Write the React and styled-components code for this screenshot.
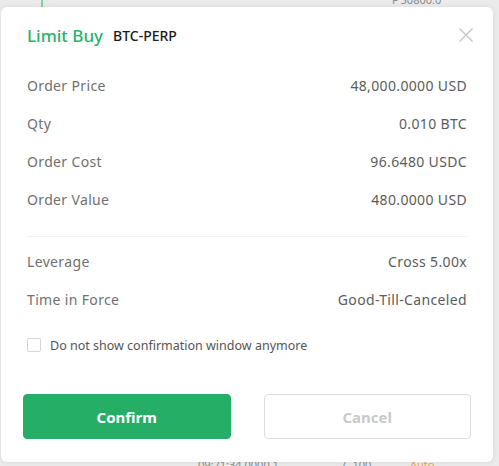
import React from "react";
import styled, { createGlobalStyle } from "styled-components";

const Global = createGlobalStyle`
  html, body { margin: 0; padding: 0; }
  body {
    background: #ebebeb;
    font-family: "Noto Sans", "Open Sans", "Liberation Sans", sans-serif;
    width: 499px;
    height: 466px;
    overflow: hidden;
  }
`;

const Stage = styled.div`
  position: relative;
  width: 499px;
  height: 466px;
  box-sizing: border-box;
  padding: 7px 6px 4px 1px;
`;

const BgLine = styled.div`
  position: absolute;
  left: 41px;
  top: 0;
  width: 2px;
  height: 7px;
  background: #7fd3a6;
`;

const BgText = styled.span`
  position: absolute;
  left: ${(p) => p.$x}px;
  top: ${(p) => p.$y}px;
  font-size: 11px;
  line-height: 12px;
  color: ${(p) => p.$c || "#8a8a8a"};
  white-space: nowrap;
`;

const Modal = styled.div`
  position: relative;
  z-index: 1;
  height: 100%;
  background: #fff;
  border-radius: 6px;
  box-shadow: 0 0 6px rgba(0, 0, 0, 0.08);
  padding: 17px 26px 0 26px;
  box-sizing: border-box;
  display: flex;
  flex-direction: column;
`;

const Header = styled.div`
  display: flex;
  align-items: center;
  height: 22px;
  gap: 10px;
`;

const Title = styled.span`
  color: #28b26a;
  font-size: 17px;
  font-weight: 500;
`;

const Symbol = styled.span`
  color: #1a1a1a;
  font-size: 14px;
  font-weight: 500;
`;

const Close = styled.button`
  margin-left: auto;
  margin-right: -7px;
  background: none;
  border: 0;
  padding: 0;
  width: 16px;
  height: 16px;
  display: flex;
  cursor: pointer;
`;

const Section = styled.div`
  display: flex;
  flex-direction: column;
  margin-top: ${(p) => p.$mt}px;
`;

const Row = styled.div`
  display: flex;
  justify-content: space-between;
  align-items: center;
  height: ${(p) => p.$h || 38}px;
  font-size: 14px;
  letter-spacing: 0.35px;
  color: #707070;
`;

const Value = styled.span`
  color: #5c5c5c;
`;

const Divider = styled.div`
  height: 1px;
  background: #f2f2f2;
  margin: 18px 0 6px;
`;

const CheckRow = styled.label`
  display: flex;
  align-items: center;
  gap: 9px;
  margin-top: 19px;
  height: 16px;
  font-size: 12.5px;
  color: #555;
`;

const Box = styled.span`
  width: 12px;
  height: 12px;
  border: 1px solid #d6d6d6;
  border-radius: 2px;
  background: #fff;
`;

const Buttons = styled.div`
  display: flex;
  gap: 33px;
  margin: 41px -4px 0;
`;

const Btn = styled.button`
  flex: 1;
  height: 45px;
  border-radius: 4px;
  font-family: inherit;
  font-size: 15px;
  font-weight: 700;
  border: 1px solid ${(p) => (p.$primary ? "#25ae65" : "#dedede")};
  background: ${(p) => (p.$primary ? "#25ae65" : "#fff")};
  color: ${(p) => (p.$primary ? "#fff" : "#c9c9c9")};
  cursor: pointer;
`;

const rows1 = [
  ["Order Price", "48,000.0000 USD"],
  ["Qty", "0.010 BTC"],
  ["Order Cost", "96.6480 USDC"],
  ["Order Value", "480.0000 USD"],
];
const rows2 = [
  ["Leverage", "Cross 5.00x"],
  ["Time in Force", "Good-Till-Canceled"],
];

export default function App() {
  return (
    <>
      <Global />
      <Stage>
        <BgLine />
        <BgText $x={392} $y={-6}>F 50800.0</BgText>
        <BgText $x={198} $y={459}>09:21:34 0000 1</BgText>
        <BgText $x={342} $y={459}>/- 100</BgText>
        <BgText $x={410} $y={459} $c="#e8a25a">Auto</BgText>
        <Modal>
          <Header>
            <Title>Limit Buy</Title>
            <Symbol>BTC-PERP</Symbol>
            <Close aria-label="close">
              <svg width="16" height="16" viewBox="0 0 16 16">
                <path d="M1.5 1.5 L14.5 14.5 M14.5 1.5 L1.5 14.5" stroke="#c4c4c4" strokeWidth="1.3" fill="none" />
              </svg>
            </Close>
          </Header>
          <Section $mt={20}>
            {rows1.map(([l, v]) => (
              <Row key={l}>
                <span>{l}</span>
                <Value>{v}</Value>
              </Row>
            ))}
          </Section>
          <Divider />
          <Section $mt={0}>
            {rows2.map(([l, v]) => (
              <Row key={l} $h={37.5}>
                <span>{l}</span>
                <Value>{v}</Value>
              </Row>
            ))}
          </Section>
          <CheckRow>
            <Box />
            Do not show confirmation window anymore
          </CheckRow>
          <Buttons>
            <Btn $primary>Confirm</Btn>
            <Btn>Cancel</Btn>
          </Buttons>
        </Modal>
      </Stage>
    </>
  );
}
